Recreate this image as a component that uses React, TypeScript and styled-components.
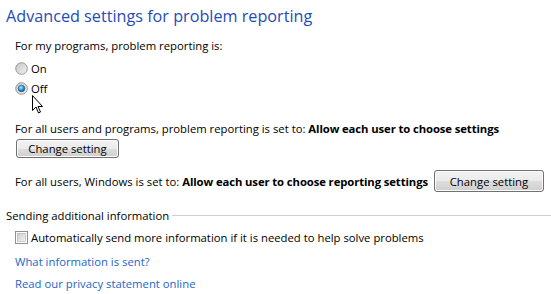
import React from 'react';
import styled, { createGlobalStyle } from 'styled-components';

const Global = createGlobalStyle`
  html, body {
    margin: 0;
    padding: 0;
    background: #fff;
  }
  body {
    font-family: 'Open Sans', 'Noto Sans', sans-serif;
    font-size: 11.3px;
    color: #000;
  }
`;

const Page = styled.div`
  width: 551px;
  height: 294px;
  overflow: hidden;
  position: relative;
  display: flex;
  flex-direction: column;
  padding: 4px 0 0 6px;
  box-sizing: border-box;
`;

const Title = styled.h1`
  margin: 0;
  font-size: 16.2px;
  font-weight: normal;
  color: #1f4cb6;
  line-height: 24px;
`;

const Section = styled.div`
  display: flex;
  flex-direction: column;
  padding-left: 9px;
`;

const Line = styled.div<{ $top?: number; $gap?: number }>`
  display: flex;
  align-items: center;
  gap: ${(p) => p.$gap ?? 4}px;
  height: 20px;
  margin-top: ${(p) => p.$top ?? 0}px;
  white-space: nowrap;
`;

const Bold = styled.b`
  font-weight: bold;
  letter-spacing: -0.1px;
`;

const Button = styled.button<{ $w: number; $h: number }>`
  width: ${(p) => p.$w}px;
  height: ${(p) => p.$h}px;
  font: inherit;
  color: #000;
  border: 1px solid #707070;
  border-radius: 3px;
  padding: 0;
  background: linear-gradient(#f2f2f2 0%, #ebebeb 50%, #dddddd 51%, #cfcfcf 100%);
  box-shadow: inset 0 0 0 1px #fcfcfc;
`;

const Group = styled.div`
  display: flex;
  align-items: center;
  gap: 3px;
  margin-top: 14px;
  height: 20px;
  &::after {
    content: '';
    flex: 1;
    border-top: 1px solid #cfcfcf;
  }
`;

const Link = styled.a`
  color: #1a66c9;
  text-decoration: none;
  cursor: pointer;
`;

const Cursor = styled.svg`
  position: absolute;
  left: 32px;
  top: 95px;
`;

const Radio: React.FC<{ checked?: boolean }> = ({ checked }) => (
  <svg width="13" height="13" viewBox="0 0 13 13">
    <defs>
      <linearGradient id={checked ? 'rOn' : 'rOff'} x1="0" y1="0" x2="1" y2="1">
        <stop offset="0" stopColor="#c4c4c4" />
        <stop offset="1" stopColor="#f4f4f4" />
      </linearGradient>
      <radialGradient id="dot" cx="0.4" cy="0.35" r="0.7">
        <stop offset="0" stopColor="#b8ecff" />
        <stop offset="0.5" stopColor="#2aa2e0" />
        <stop offset="1" stopColor="#0a4a8c" />
      </radialGradient>
    </defs>
    <circle cx="6.5" cy="6.5" r="5.8" fill={`url(#${checked ? 'rOn' : 'rOff'})`} stroke="#8e8f8f" strokeWidth="0.9" />
    {checked && <circle cx="6.5" cy="6.5" r="3.3" fill="url(#dot)" stroke="#1c5180" strokeWidth="0.6" />}
  </svg>
);

const Check = () => (
  <svg width="13" height="13" viewBox="0 0 13 13">
    <defs>
      <linearGradient id="cb" x1="0" y1="0" x2="1" y2="1">
        <stop offset="0" stopColor="#cbcbcb" />
        <stop offset="1" stopColor="#f5f5f5" />
      </linearGradient>
    </defs>
    <rect x="0.5" y="0.5" width="12" height="12" fill="#fff" stroke="#8e8f8f" />
    <rect x="2.5" y="2.5" width="8" height="8" fill="url(#cb)" stroke="#b0b0b0" strokeWidth="0.6" />
  </svg>
);

const App: React.FC = () => (
  <>
    <Global />
    <Page>
      <Title>Advanced settings for problem reporting</Title>
      <Section>
        <Line $top={7}>For my programs, problem reporting is:</Line>
        <Line $top={3} $gap={3}>
          <Radio />
          On
        </Line>
        <Line $gap={3}>
          <Radio checked />
          Off
        </Line>
        <Line $top={20}>
          <span>
            For all users and programs, problem reporting is set to: <Bold>Allow each user to choose settings</Bold>
          </span>
        </Line>
        <Line style={{ paddingLeft: 1 }}>
          <Button $w={103} $h={19}>Change setting</Button>
        </Line>
        <Line $top={13} $gap={6}>
          <span>
            For all users, Windows is set to: <Bold>Allow each user to choose reporting settings</Bold>
          </span>
          <Button $w={110} $h={22}>Change setting</Button>
        </Line>
      </Section>
      <Group>Sending additional information</Group>
      <Section>
        <Line $top={2} $gap={3}>
          <Check />
          Automatically send more information if it is needed to help solve problems
        </Line>
        <Line $top={4}>
          <Link>What information is sent?</Link>
        </Line>
        <Line $top={2}>
          <Link>Read our privacy statement online</Link>
        </Line>
      </Section>
      <Cursor width="12" height="19" viewBox="0 0 12 19">
        <path d="M0.5 0.5 L0.5 15.5 L4 12 L6.5 18 L8.5 17 L6 11.5 L10.5 11.5 Z" fill="#fff" stroke="#000" strokeWidth="1" strokeLinejoin="miter" />
      </Cursor>
    </Page>
  </>
);

export default App;
